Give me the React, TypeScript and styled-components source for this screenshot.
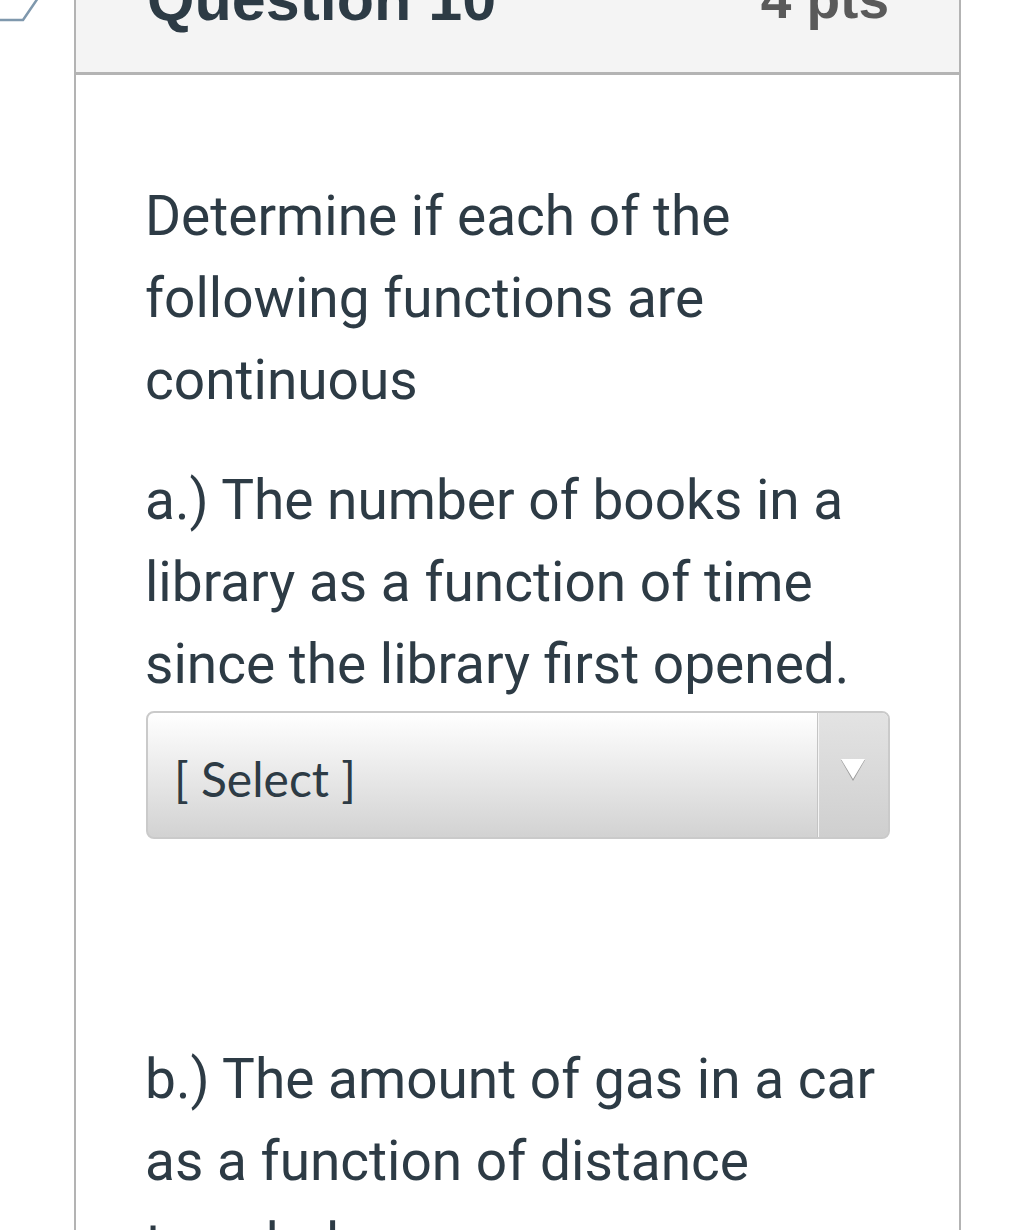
import React from 'react';
import styled, { createGlobalStyle } from 'styled-components';

const GlobalStyle = createGlobalStyle`
  html, body {
    margin: 0;
    padding: 0;
    background: #fff;
    overflow: hidden;
  }
`;

const Page = styled.div`
  display: flex;
  align-items: flex-start;
  height: 1230px;
  overflow: hidden;
`;

const Gutter = styled.div`
  width: 74px;
  flex-shrink: 0;
  display: flex;
`;

const Card = styled.div`
  width: 883px;
  margin-top: -40px;
  border-left: 2px solid #b3b3b3;
  border-right: 2px solid #b3b3b3;
  background: #fff;
`;

const Header = styled.div`
  height: 103px;
  padding: 9px 70px 0 71px;
  display: flex;
  justify-content: space-between;
  align-items: flex-start;
  background: #f4f4f4;
  border-bottom: 3px solid #b4b4b4;
`;

const Title = styled.div`
  font-family: "Liberation Sans", Arial, sans-serif;
  font-weight: 700;
  font-size: 61px;
  line-height: 1;
  color: #2d3b45;
`;

const Points = styled.div`
  font-family: "Liberation Sans", Arial, sans-serif;
  font-weight: 700;
  font-size: 55px;
  line-height: 1;
  margin-top: 3px;
  color: #5a5a5a;
`;

const Body = styled.div`
  padding: 100px 69px 0 69px;
`;

const Text = styled.p<{ gap?: number }>`
  margin: 0 0 ${p => p.gap ?? 38}px;
  font-family: Roboto, "Noto Sans", sans-serif;
  font-size: 55px;
  line-height: 82px;
  color: #2d3b45;
`;

const Select = styled.div`
  height: 124px;
  margin: 6px 0 199px 1px;
  display: flex;
  border: 2px solid #cacaca;
  border-radius: 8px;
  overflow: hidden;
  background: linear-gradient(#ffffff, #d2d2d2);
`;

const Value = styled.div`
  flex: 1;
  display: flex;
  align-items: center;
  padding: 6px 0 0 26px;
  font-family: Lato, "Open Sans", sans-serif;
  font-size: 48px;
  color: #2d3b45;
`;

const ArrowBox = styled.div`
  width: 70px;
  display: flex;
  justify-content: center;
  padding-top: 44px;
  border-left: 1px solid #c4c4c4;
  box-shadow: inset 1px 0 0 #f4f4f4;
  background: linear-gradient(#e3e3e3, #cfcfcf);
`;

const Arrow = () => (
  <svg width="28" height="26" viewBox="0 0 28 26">
    <path d="M2 3 L26 3 L14 24 Z" fill="#9a9a9a" />
    <path d="M2 2 L26 2 L14 22 Z" fill="#ffffff" />
  </svg>
);

const Corner = () => (
  <svg width="44" height="26" viewBox="0 0 44 26">
    <path
      d="M0 20 L23 20 L38 -2"
      fill="none"
      stroke="#7f98ad"
      strokeWidth="2.5"
      strokeLinejoin="round"
    />
  </svg>
);

export default function App() {
  return (
    <>
      <GlobalStyle />
      <Page>
        <Gutter>
          <Corner />
        </Gutter>
        <Card>
          <Header>
            <Title>Question 10</Title>
            <Points>4 pts</Points>
          </Header>
          <Body>
            <Text>Determine if each of the following functions are continuous</Text>
            <Text gap={0}>
              a.) The number of books in a library as a function of time since the library first
              opened.
            </Text>
            <Select>
              <Value>[ Select ]</Value>
              <ArrowBox>
                <Arrow />
              </ArrowBox>
            </Select>
            <Text>b.) The amount of gas in a car as a function of distance traveled.</Text>
          </Body>
        </Card>
      </Page>
    </>
  );
}
